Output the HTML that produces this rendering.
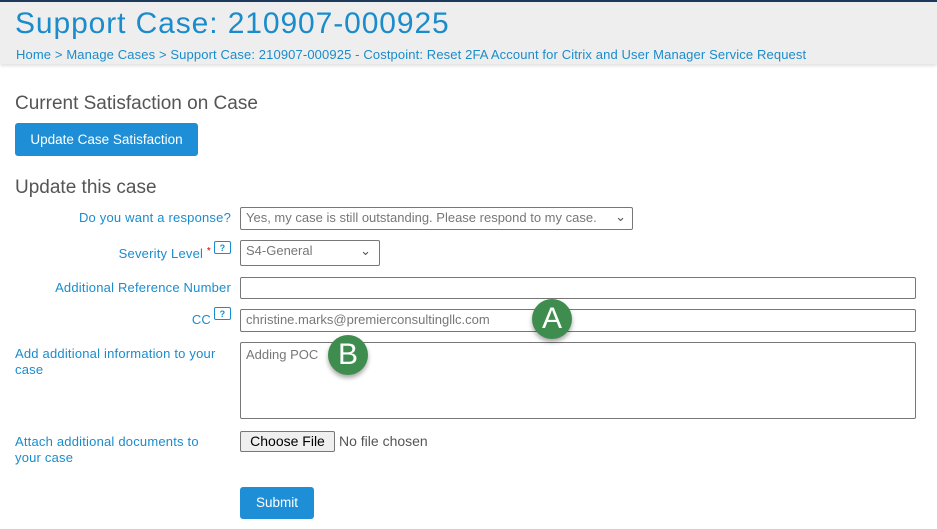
<!DOCTYPE html>
<html><head><meta charset="utf-8"><style>
*{box-sizing:border-box}
body{margin:0;width:937px;height:529px;background:#fff;font-family:"Liberation Sans",sans-serif;position:relative;overflow:hidden}
.hdr{position:absolute;left:0;top:0;width:937px;height:64px;background:#eeeeee;border-top:2px solid #1b3a5c;box-shadow:0 2px 3px rgba(0,0,0,.12)}
.t{position:absolute;left:15px;top:5px;font-size:30px;color:#1a8ccc;letter-spacing:.9px}
.bc{position:absolute;left:16px;top:45px;font-size:13px;color:#1a8ccc;letter-spacing:.12px}
.a{position:absolute}
h2{position:absolute;margin:0;font-weight:normal;font-size:19px;color:#555}
.btn{position:absolute;background:#1e8fd6;color:#fff;border-radius:3px;font-size:13.5px;text-align:center}
.lbl{position:absolute;font-size:13px;color:#1a8ccc;letter-spacing:.2px}
.r{text-align:right;width:231px;left:0}
.in{position:absolute;border:1px solid #777;border-radius:2px;background:#fff;font-size:13px;color:#777;padding:2px 5px}
.q{display:inline-block;width:17px;height:13px;border:1px solid #1a8ccc;border-radius:2px;font-size:9px;text-align:center;line-height:12px;vertical-align:top;margin-left:3px;margin-top:-5px;color:#1a8ccc;font-weight:bold}
.c{position:absolute;width:40px;height:40px;border-radius:50%;background:#3f8c4f;color:#fff;font-size:30px;text-align:center;line-height:40px;box-shadow:0 3px 5px rgba(0,0,0,.35)}
</style></head><body>
<div class="hdr"><div class="t">Support Case: 210907-000925</div>
<div class="bc">Home &gt; Manage Cases &gt; Support Case: 210907-000925 - Costpoint: Reset 2FA Account for Citrix and User Manager Service Request</div></div>
<h2 style="left:15px;top:93px">Current Satisfaction on Case</h2>
<div class="btn" style="left:15px;top:123px;width:183px;height:33px;line-height:33px">Update Case Satisfaction</div>
<h2 style="left:15px;top:177px">Update this case</h2>
<div class="lbl r" style="top:210px">Do you want a response?</div>
<div class="in" style="left:240px;top:207px;width:393px;height:23px">Yes, my case is still outstanding. Please respond to my case. <span style="position:absolute;right:6px;top:1px;color:#555">⌄</span></div>
<div class="lbl r" style="top:246px">Severity Level <span style="color:#c00;font-size:10px;vertical-align:top">*</span><span class="q">?</span></div>
<div class="in" style="left:240px;top:240px;width:140px;height:26px">S4-General<span style="position:absolute;right:8px;top:2px;color:#555">⌄</span></div>
<div class="lbl r" style="top:280px">Additional Reference Number</div>
<div class="in" style="left:240px;top:277px;width:676px;height:22px"></div>
<div class="lbl r" style="top:312px">CC<span class="q">?</span></div>
<div class="in" style="left:240px;top:309px;width:676px;height:23px">christine.marks@premierconsultingllc.com</div>
<div class="lbl" style="left:15px;top:346px;width:220px;line-height:16px">Add additional information to your case</div>
<div class="in" style="left:240px;top:342px;width:676px;height:77px;padding-top:4px">Adding POC</div>
<div class="lbl" style="left:15px;top:434px;width:210px;line-height:16px">Attach additional documents to your case</div>
<div class="a" style="left:240px;top:431px;width:95px;height:21px;border:1px solid #777;background:#efefef;border-radius:2px;font-size:14px;text-align:center;line-height:19px;color:#000">Choose File</div>
<div class="a" style="left:339px;top:433px;font-size:14px;color:#555">No file chosen</div>
<div class="btn" style="left:240px;top:487px;width:74px;height:32px;line-height:32px">Submit</div>
<div class="c" style="left:532px;top:299px">A</div>
<div class="c" style="left:328px;top:335px">B</div>
</body></html>
